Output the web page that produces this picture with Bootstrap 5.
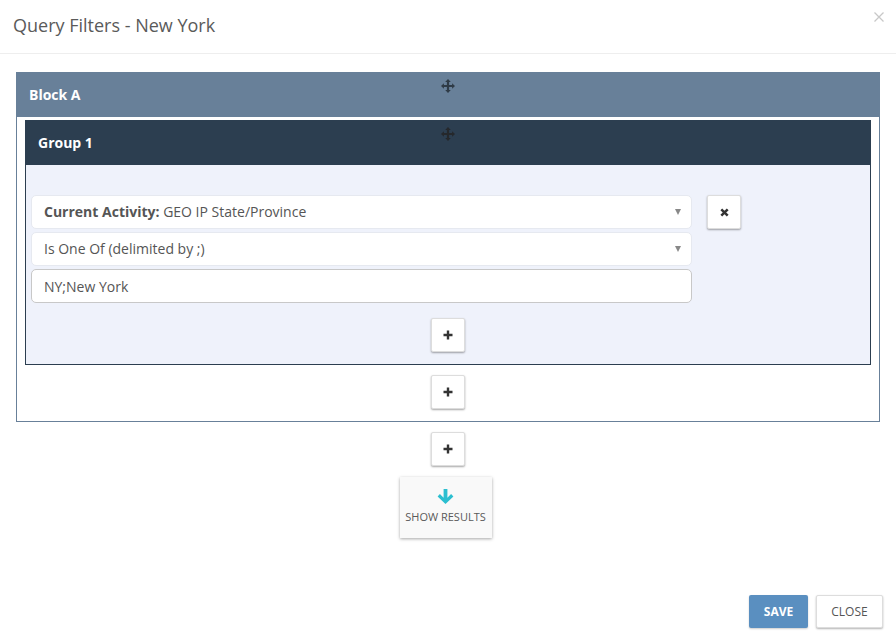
<!DOCTYPE html>
<html lang="en">
<head>
<meta charset="utf-8">
<title>Query Filters - New York</title>
<link rel="stylesheet" href="https://cdn.jsdelivr.net/npm/bootstrap@5.3.0/dist/css/bootstrap.min.css">
<style>
html,body{height:100%;}
body{font-family:"Open Sans","Liberation Sans",sans-serif;font-size:14px;color:#555;background:#fff;overflow:hidden;}
.qf-shell{height:639px;}
.qf-head{height:54px;border-bottom:1px solid #eee;padding:0 13px;position:relative;}
.qf-title{font-size:18px;font-weight:400;color:#5a5a5a;margin:0;line-height:51px;}
.qf-dismiss{position:absolute;top:11px;right:11px;width:12px;height:12px;background:none;border:0;padding:0;display:block;line-height:0;}
.qf-body{padding:18px 16px 0;}
.qf-block{border:1px solid #688099;border-top:0;padding-bottom:2px;}
.qf-bar{height:45px;display:flex;align-items:center;font-weight:700;color:#fff;font-size:14px;position:relative;}
.qf-bar-a{background:#688099;margin:0 -1px;padding-left:13px;}
.qf-bar-g{background:#2c3e50;margin:0 -1px;padding-left:13px;}
.qf-move{position:absolute;left:50%;top:7px;margin-left:-7px;width:14px;height:14px;display:block;}
.qf-group-wrap{padding:3px 8px 10px;}
.qf-group{border:1px solid #2c3e50;border-top:0;background:#eff2fb;}
.qf-group-body{padding:30px 0 12px;}
.qf-row{padding-left:5px;}
.qf-fields{width:661px;display:flex;flex-direction:column;gap:3px;}
.qf-field{height:34px;background:#fff;border:1px solid #e6e9f0;border-radius:5px;padding:0 12px 2px;display:flex;align-items:center;justify-content:space-between;font-size:14px;color:#555;}
.qf-input{border-color:#c8c8c8;padding-bottom:0;}
.qf-caret{width:0;height:0;border-left:3.5px solid transparent;border-right:3.5px solid transparent;border-top:6px solid #888;margin-right:-2px;margin-top:2px;}
.qf-sq{width:34px;height:34px;background:#fff;border:1px solid #ddd;border-radius:2px;box-shadow:0 1px 2px rgba(0,0,0,.35);padding:0;display:flex;align-items:center;justify-content:center;line-height:0;}
.qf-remove{margin-left:15px;}
.qf-add-a{margin-top:15px;}
.qf-add-b{margin-top:10px;}
.qf-add-c{margin-top:10px;}
.qf-results-wrap{padding-right:5px;}
.qf-results{width:92px;height:61px;margin-top:11px;background:#f9f9f9;border:0;box-shadow:0 1px 3px rgba(0,0,0,.35);font-size:11px;color:#5a5a5a;padding:12px 0 0;display:flex;flex-direction:column;align-items:center;gap:5px;border-radius:0;}
.qf-foot{padding:0 13px 11px 0;gap:8px;}
.qf-save,.qf-close{height:33px;font-size:12px;border-radius:2px;padding:0;display:flex;align-items:center;justify-content:center;}
.qf-save{width:59px;background:#5a8fc0;border:0;color:#fff;font-weight:700;box-shadow:0 1px 2px rgba(0,0,0,.2);}
.qf-close{width:67px;background:#fff;border:1px solid #ddd;color:#555;box-shadow:0 1px 2px rgba(0,0,0,.3);}
</style>
</head>
<body>
<div class="qf-shell d-flex flex-column">
  <header class="qf-head">
    <h1 class="qf-title">Query Filters - New York</h1>
    <button class="qf-dismiss" type="button" aria-label="Close"><svg width="12" height="12" viewBox="0 0 12 12"><path d="M1.5 1.5l9 9M10.5 1.5l-9 9" stroke="#c8c8c8" stroke-width="1.3" fill="none"/></svg></button>
  </header>
  <main class="qf-body">
    <section class="qf-block">
      <div class="qf-bar qf-bar-a">Block A
        <svg class="qf-move" viewBox="0 0 14 14"><path d="M7 0l2.8 2.9H8.1v3h3V4.2L14 7l-2.9 2.8V8.1h-3v3h1.7L7 14l-2.8-2.9h1.7v-3h-3v1.7L0 7l2.9-2.8v1.7h3v-3H4.2z" fill="#2f3b47"/></svg>
      </div>
      <div class="qf-group-wrap">
        <div class="qf-group">
          <div class="qf-bar qf-bar-g">Group 1
            <svg class="qf-move" viewBox="0 0 14 14"><path d="M7 0l2.8 2.9H8.1v3h3V4.2L14 7l-2.9 2.8V8.1h-3v3h1.7L7 14l-2.8-2.9h1.7v-3h-3v1.7L0 7l2.9-2.8v1.7h3v-3H4.2z" fill="#25282c"/></svg>
          </div>
          <div class="qf-group-body">
            <div class="d-flex align-items-start qf-row">
              <div class="qf-fields">
                <div class="qf-field"><span><b>Current Activity:</b> GEO IP State/Province</span><i class="qf-caret"></i></div>
                <div class="qf-field"><span>Is One Of (delimited by ;)</span><i class="qf-caret"></i></div>
                <div class="qf-field qf-input"><span>NY;New York</span></div>
              </div>
              <button class="qf-sq qf-remove" type="button" aria-label="Remove"><svg width="9" height="9" viewBox="0 0 9 9"><path d="M1.3 1.3l6.4 6.4M7.7 1.3L1.3 7.7" stroke="#333" stroke-width="2.5" fill="none"/></svg></button>
            </div>
            <div class="d-flex justify-content-center qf-add-a">
              <button class="qf-sq" type="button" aria-label="Add"><svg width="10" height="10" viewBox="0 0 10 10"><path d="M5 .5v9M.5 5h9" stroke="#333" stroke-width="2.4" fill="none"/></svg></button>
            </div>
          </div>
        </div>
        <div class="d-flex justify-content-center qf-add-b">
          <button class="qf-sq" type="button" aria-label="Add"><svg width="10" height="10" viewBox="0 0 10 10"><path d="M5 .5v9M.5 5h9" stroke="#333" stroke-width="2.4" fill="none"/></svg></button>
        </div>
      </div>
    </section>
    <div class="d-flex justify-content-center qf-add-c">
      <button class="qf-sq" type="button" aria-label="Add"><svg width="10" height="10" viewBox="0 0 10 10"><path d="M5 .5v9M.5 5h9" stroke="#333" stroke-width="2.4" fill="none"/></svg></button>
    </div>
    <div class="d-flex justify-content-center qf-results-wrap">
      <button class="qf-results" type="button">
        <svg width="17" height="15" viewBox="0 0 17 15"><path d="M8.5 15L.6 7.4l2.3-2.3 3.7 3.6V0h3.8v8.7l3.7-3.6 2.3 2.3z" fill="#2cbfd0"/></svg>
        <span>SHOW RESULTS</span>
      </button>
    </div>
  </main>
  <footer class="qf-foot d-flex justify-content-end mt-auto">
    <button class="qf-save" type="button">SAVE</button>
    <button class="qf-close" type="button">CLOSE</button>
  </footer>
</div>
<script src="https://cdn.jsdelivr.net/npm/bootstrap@5.3.0/dist/js/bootstrap.bundle.min.js"></script>
</body>
</html>
